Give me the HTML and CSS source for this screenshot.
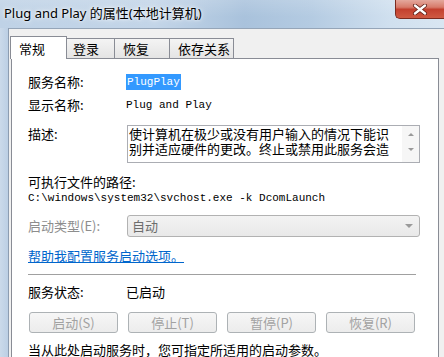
FILE: index.html
```html
<!DOCTYPE html>
<html lang="zh-CN">
<head>
    <meta charset="UTF-8">
    <title>Plug and Play 的属性</title>
    <link rel="stylesheet" href="styles.css">
</head>
<body>
    <div class="window">
        <header class="titlebar">
            <span class="title">Plug and Play 的属性(本地计算机)</span>
            <span class="close">
                <svg width="16" height="11" viewBox="0 0 16 11">
                    <path d="M3 1.5 L13 9.5 M13 1.5 L3 9.5" stroke="#5a1a12" stroke-width="4" stroke-linecap="round"/>
                    <path d="M3 1.5 L13 9.5 M13 1.5 L3 9.5" stroke="#fff" stroke-width="2.4" stroke-linecap="round"/>
                </svg>
            </span>
        </header>
        <div class="frame">
            <div class="edge"></div>
            <div class="client">
                <nav class="tabs">
                    <a class="tab active" href="javascript:;">常规</a>
                    <a class="tab t-logon" href="javascript:;">登录</a>
                    <a class="tab t-recover" href="javascript:;">恢复</a>
                    <a class="tab t-deps" href="javascript:;">依存关系</a>
                </nav>
                <section class="panel">
                    <div class="row">
                        <span class="label">服务名称:</span>
                        <span class="mono sel">PlugPlay</span>
                    </div>
                    <div class="row r-display">
                        <span class="label">显示名称:</span>
                        <span class="mono">Plug and Play</span>
                    </div>
                    <div class="row r-desc">
                        <span class="label">描述:</span>
                        <div class="desc-box">
                            <p class="desc-text">使计算机在极少或没有用户输入的情况下能识别并适应硬件的更改。终止或禁用此服务会造</p>
                            <div class="scroll">
                                <span class="arrow up"></span>
                                <span class="arrow down"></span>
                            </div>
                        </div>
                    </div>
                    <div class="row r-path">可执行文件的路径:</div>
                    <div class="row mono">C:\windows\system32\svchost.exe -k DcomLaunch</div>
                    <div class="row r-type">
                        <span class="label disabled">启动类型(E):</span>
                        <div class="combo">
                            <span>自动</span>
                            <span class="combo-arrow"></span>
                        </div>
                    </div>
                    <div class="row r-link"><a href="javascript:;">帮助我配置服务启动选项。</a></div>
                    <div class="sep"></div>
                    <div class="row r-status">
                        <span class="label">服务状态:</span>
                        <span>已启动</span>
                    </div>
                    <div class="buttons">
                        <button disabled>启动(S)</button>
                        <button disabled>停止(T)</button>
                        <button disabled>暂停(P)</button>
                        <button disabled>恢复(R)</button>
                    </div>
                    <div class="row r-note">当从此处启动服务时，您可指定所适用的启动参数。</div>
                </section>
            </div>
        </div>
    </div>
</body>
</html>
```

FILE: styles.css
```css
* {
    padding: 0;
    margin: 0;
    box-sizing: border-box;
}

html,
body {
    width: 444px;
    height: 357px;
    overflow: hidden;
}

body {
    font-family: "Noto Sans CJK SC", "Noto Sans", sans-serif;
    font-size: 13px;
    color: #000;
    background: #f0f0f0;
}

.window {
    display: flex;
    flex-direction: column;
    height: 100%;
}

/* 标题栏 */
.titlebar {
    height: 28px;
    flex: none;
    display: flex;
    justify-content: space-between;
    align-items: flex-start;
    background: linear-gradient(180deg, rgba(255, 255, 255, .15), rgba(255, 255, 255, 0) 60%),
        linear-gradient(90deg, #bfd2e6 0%, #c3d5e8 35%, #a9c2dc 55%, #b4cbe2 70%, #d0e0ef 88%, #d9e6f2 100%);
}

.title {
    padding-left: 4px;
    line-height: 27px;
    font-family: "Noto Sans", "Noto Sans CJK SC", sans-serif;
    font-size: 13px;
    text-shadow: 0 0 6px rgba(255, 255, 255, .9), 0 0 3px rgba(255, 255, 255, .9);
}

.close {
    width: 49px;
    height: 19px;
    display: flex;
    align-items: center;
    justify-content: center;
    background: linear-gradient(180deg, #e4a89d 0%, #d77a6a 40%, #c3402f 52%, #cf5a43 100%);
    border: 1px solid #7b2b20;
    border-top: none;
    border-right: none;
    border-radius: 0 0 0 5px;
}

.frame {
    flex: 1;
    display: flex;
}

.edge {
    width: 9px;
    flex: none;
    background: linear-gradient(90deg, #cbdaea, #bccfe4);
    border-right: 1px solid #8d9db1;
}

.client {
    flex: 1;
    border-top: 1px solid #95a5b8;
    padding: 7px 0 0 1px;
}

/* 选项卡 */
.tabs {
    display: flex;
    align-items: flex-end;
    height: 22px;
    position: relative;
    z-index: 1;
}

.tab {
    height: 20px;
    line-height: 19px;
    padding-left: 6px;
    border: 1px solid #898c95;
    border-bottom: none;
    background: linear-gradient(#f4f4f4, #e4e4e4);
    color: #000;
    text-decoration: none;
    margin-left: -1px;
}

.tab.active {
    width: 57px;
    height: 23px;
    margin: 0 0 -1px 0;
    padding: 3px 0 0 8px;
    line-height: 18px;
    background: #fff;
}

.t-logon {
    width: 49px;
    padding-left: 6px;
}

.t-recover {
    width: 56px;
    padding-left: 8px;
}

.t-deps {
    width: 65px;
    padding-left: 8px;
}

.panel {
    width: 428px;
    height: 400px;
    margin-left: 1px;
    background: #fff;
    border: 1px solid #898c95;
    padding: 15px 18px 0 16px;
}

/* 各行 */
.row {
    display: flex;
    height: 16px;
    line-height: 16px;
    white-space: nowrap;
}

.label {
    width: 98px;
    flex: none;
}

.mono {
    font-family: "Liberation Mono", monospace;
    font-size: 11px;
}

.sel {
    background: #3399ff;
    color: #fff;
    padding: 0 1px;
}

.r-display {
    margin-top: 7px;
}

.r-desc {
    margin-top: 12px;
    height: 38px;
    line-height: 18px;
}

.desc-box {
    width: 293px;
    height: 38px;
    margin-left: 1px;
    display: flex;
    border: 1px solid #abadb3;
}

.desc-text {
    flex: 1;
    padding: 0 8px 0 1px;
    line-height: 15px;
    white-space: normal;
}

.scroll {
    width: 17px;
    flex: none;
    background: #f6f6f6;
    display: flex;
    flex-direction: column;
    align-items: center;
    padding-top: 7px;
    gap: 12px;
}

.arrow {
    width: 0;
    height: 0;
    border-left: 3px solid transparent;
    border-right: 3px solid transparent;
}

.arrow.up {
    border-bottom: 3px solid #9a9a9a;
}

.arrow.down {
    border-top: 3px solid #9a9a9a;
}

.r-path {
    margin-top: 11px;
}

.r-type {
    margin-top: 9px;
    height: 22px;
    line-height: 22px;
}

.disabled {
    color: #8d8d8d;
}

.combo {
    width: 293px;
    height: 22px;
    margin-left: 1px;
    display: flex;
    justify-content: space-between;
    align-items: center;
    padding: 0 6px 0 4px;
    border: 1px solid #b2b2b2;
    border-radius: 3px;
    background: linear-gradient(#f3f3f3, #e9e9e9);
    color: #6d6d6d;
}

.combo-arrow {
    width: 0;
    height: 0;
    border-left: 4px solid transparent;
    border-right: 4px solid transparent;
    border-top: 4px solid #9a9a9a;
}

.r-link {
    margin-top: 11px;
}

.r-link a {
    color: #0066cc;
    text-decoration: underline;
}

.sep {
    width: 388px;
    margin-top: 10px;
    border-top: 1px solid #a0a0a0;
    border-bottom: 1px solid #fff;
}

.r-status {
    margin-top: 8px;
}

.buttons {
    display: flex;
    gap: 10px;
    margin: 12px 0 0 1px;
}

.buttons button {
    width: 89px;
    height: 21px;
    border: 1px solid #adb2b5;
    border-radius: 3px;
    background: linear-gradient(#f6f6f6, #ececec);
    color: #a2a2a2;
    font-family: "Noto Sans CJK SC", sans-serif;
    font-size: 13px;
    line-height: 19px;
}

.r-note {
    margin-top: 9px;
}
```
